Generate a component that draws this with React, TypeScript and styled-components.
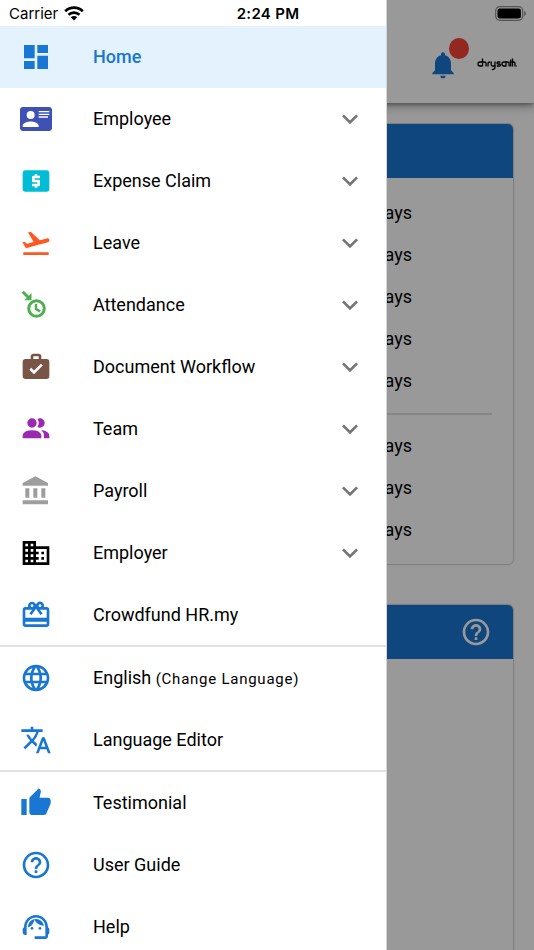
import React from "react";
import styled, { createGlobalStyle, css } from "styled-components";
import type { IconType } from "react-icons";
import {
  MdCardGiftcard,
  MdDashboard,
  MdDomain,
  MdExpandMore,
  MdFlightTakeoff,
  MdHelpOutline,
  MdLanguage,
  MdNotifications,
  MdSupportAgent,
  MdThumbUp,
  MdTranslate,
} from "react-icons/md";

const BLUE = "#1976d2";

const GlobalStyle = createGlobalStyle`
  *, *::before, *::after { box-sizing: border-box; }
  body {
    margin: 0;
    background: #fff;
    color: #000;
    font-family: Roboto, "Liberation Sans", sans-serif;
    font-size: 18px;
    line-height: 24px;
  }
  button { font: inherit; color: inherit; background: none; border: 0; padding: 0; cursor: pointer; }
  svg { display: block; flex: none; }
`;

const Screen = styled.div`
  position: relative;
  height: 100vh;
  overflow: hidden;
`;

/* ---------- page behind the drawer ---------- */

const AppBar = styled.header`
  display: flex;
  align-items: center;
  justify-content: flex-end;
  gap: 18px;
  height: 103px;
  padding: 26px 17px 0 0;
  background: #fff;
  box-shadow: 0 2px 4px rgba(0, 0, 0, 0.3), 0 4px 10px rgba(0, 0, 0, 0.25);
`;

const BellButton = styled.button`
  position: relative;
  color: ${BLUE};
`;

const Badge = styled.span`
  position: absolute;
  top: -11px;
  right: -10px;
  width: 20px;
  height: 21px;
  border-radius: 50%;
  background: #f44336;
`;

const Cards = styled.main`
  display: flex;
  flex-direction: column;
  gap: 39px;
  padding: 20px 20px 0;
`;

const Card = styled.section`
  border: 1px solid #d6d6d6;
  border-radius: 6px;
  overflow: hidden;
  box-shadow: 0 0 1px rgba(0, 0, 0, 0.2);
`;

const CardHeader = styled.div`
  display: flex;
  align-items: center;
  justify-content: flex-end;
  height: 54px;
  padding-right: 21px;
  background: ${BLUE};
  color: #fff;
`;

const DayGroup = styled.ul`
  margin: 0 21px;
  padding: 14px 0 11px;
  list-style: none;
  & + & {
    padding: 10px 0 13px;
    border-top: 2px solid #e0e0e0;
  }
`;

const DayRow = styled.li`
  display: flex;
  align-items: center;
  justify-content: flex-end;
  min-height: 42px;
  padding-right: 80px;
`;

const EmptyBody = styled.div`
  height: 400px;
`;

/* ---------- overlay and drawer ---------- */

const Scrim = styled.div`
  position: absolute;
  inset: 0;
  background: rgba(0, 0, 0, 0.4);
`;

const Drawer = styled.nav`
  position: absolute;
  inset: 0 auto 0 0;
  width: 387px;
  max-width: 90%;
  padding-top: 26px;
  overflow: hidden;
  background: #fff;
  border-right: 1px solid #d6d6d6;
`;

const Group = styled.ul`
  margin: 0;
  padding: 0;
  list-style: none;
  & + & {
    margin-top: -1px;
    border-top: 2px solid #e2e2e2;
  }
`;

const itemLayout = css`
  display: flex;
  align-items: center;
  width: 100%;
  height: 62px;
  padding: 0 20px;
  text-align: left;
  text-decoration: none;
`;

const ItemLink = styled.a<{ $active?: boolean }>`
  ${itemLayout}
  color: ${(p) => (p.$active ? BLUE : "#000")};
  background: ${(p) => (p.$active ? "#e3f2fd" : "transparent")};
  font-weight: ${(p) => (p.$active ? 500 : 400)};
`;

const ItemButton = styled.button`
  && { ${itemLayout} }
`;

const IconSlot = styled.span<{ $color: string }>`
  display: flex;
  width: 73px;
  color: ${(p) => p.$color};
`;

const Label = styled.span`
  flex: 1;
`;

const Hint = styled.span`
  font-size: 15px;
  letter-spacing: 0.05em;
`;

const Chevron = styled(MdExpandMore)`
  color: #757575;
`;

/* ---------- status bar ---------- */

const StatusBar = styled.div`
  position: absolute;
  inset: 0 0 auto 0;
  display: grid;
  grid-template-columns: 1fr auto 1fr;
  align-items: center;
  height: 26px;
  padding: 1px 7px 0 9px;
  font-family: Inter, "Liberation Sans", sans-serif;
  font-size: 15px;
`;

const Carrier = styled.span`
  display: flex;
  align-items: center;
  gap: 6px;
`;

const Clock = styled.time`
  font-weight: 600;
  letter-spacing: 0.02em;
`;

const BatterySlot = styled.span`
  justify-self: end;
`;

/* ---------- drawings ---------- */

const glyph = (d: string) =>
  function Glyph({ size = 32 }: { size?: number | string }) {
    return (
      <svg width={size} height={size} viewBox="0 0 24 24" fill="currentColor" aria-hidden="true">
        <path d={d} />
      </svg>
    );
  };

const CardAccount = glyph(
  "M2,3H22C23.05,3 24,3.95 24,5V19C24,20.05 23.05,21 22,21H2C0.95,21 0,20.05 0,19V5C0,3.95 0.95,3 2,3M14,6V7H22V6H14M14,8V9H21.5L22,9V8H14M14,10V11H21V10H14M8,13.91C6,13.91 2,15 2,17V18H14V17C14,15 10,13.91 8,13.91M8,6A3,3 0 0,0 5,9A3,3 0 0,0 8,12A3,3 0 0,0 11,9A3,3 0 0,0 8,6Z",
);
const Cash = glyph(
  "M20,4H4C2.89,4 2,4.89 2,6V18A2,2 0 0,0 4,20H20A2,2 0 0,0 22,18V6C22,4.89 21.1,4 20,4M15,10H11V11H14A1,1 0 0,1 15,12V15A1,1 0 0,1 14,16H13V17H11V16H9V14H13V13H10A1,1 0 0,1 9,12V9A1,1 0 0,1 10,8H11V7H13V8H15V10Z",
);
const BriefcaseCheck = glyph(
  "M10,2H14A2,2 0 0,1 16,4V6H20A2,2 0 0,1 22,8V19A2,2 0 0,1 20,21H4C2.89,21 2,20.1 2,19V8C2,6.89 2.89,6 4,6H8V4C8,2.89 8.89,2 10,2M14,6V4H10V6H14M10.5,17.5L17.09,10.91L15.68,9.5L10.5,14.67L8.41,12.59L7,14L10.5,17.5Z",
);
const People = glyph(
  "M16 17V19H2V17S2 13 9 13 16 17 16 17M12.5 7.5A3.5 3.5 0 1 0 9 11A3.5 3.5 0 0 0 12.5 7.5M15.94 13A5.32 5.32 0 0 1 18 17V19H22V17S22 13.37 15.94 13M15 4A3.39 3.39 0 0 0 13.07 4.59A5 5 0 0 1 13.07 10.41A3.39 3.39 0 0 0 15 11A3.5 3.5 0 0 0 15 4Z",
);
const Bank = glyph("M11.5,1L2,6V8H21V6M16,10V17H19V10M2,22H21V19H2M10,10V17H13V10M4,10V17H7V10H4Z");

function ClockIn() {
  return (
    <svg width="32" height="32" viewBox="0 0 32 32" fill="none" stroke="currentColor" aria-hidden="true">
      <circle cx="16.5" cy="19.5" r="7.8" strokeWidth="3" />
      <path d="M16 15v5l4 2.400" strokeWidth="2.4" />
      <path d="M2.700 2.700l6 6" strokeWidth="3" />
      <path d="M11.500 4v7.200H4.300z" fill="currentColor" stroke="none" />
    </svg>
  );
}

function Wifi() {
  return (
    <svg width="20" height="15" viewBox="0 0 20 15" fill="none" stroke="#000" strokeWidth="2.7" aria-hidden="true">
      <path d="M1.2 5.3a12.6 12.6 0 0 1 17.6 0" />
      <path d="M4.500 8.800a7.900 7.900 0 0 1 11 0" />
      <path d="M10 14.500l-3.200-3.200a4.600 4.600 0 0 1 6.400 0z" fill="#000" stroke="none" />
    </svg>
  );
}

function Battery() {
  return (
    <svg width="32" height="15" viewBox="0 0 32 15" role="img" aria-label="Battery full">
      <rect x="0.7" y="0.7" width="27" height="13.6" rx="4" fill="none" stroke="#000" strokeOpacity="0.45" strokeWidth="1.2" />
      <rect x="2.5" y="2.5" width="23.4" height="10" rx="2.3" />
      <path d="M29.200 5v5q1.800-.8 1.800-2.500t-1.800-2.500z" fillOpacity="0.45" />
    </svg>
  );
}

function Logo() {
  return (
    <svg width="40" height="13" viewBox="0 0 40 13" fill="none" stroke="#000" strokeWidth="1.3" strokeLinejoin="round" role="img" aria-label="chrysanth.">
      <path d="M5 4H3Q1 4 1 6T3 8H5" />
      <path d="M5.500 0.500V8.600M5.500 4h2Q9 4 9 5.600V8.600" />
      <path d="M11 8.600V5.600Q11 4 13.200 4" />
      <path d="M14.200 3.400V6.400Q14.200 8 15.800 8H17.800M18 3.400V9q0 2.600-3.200 2.600" />
      <path d="M23.400 4H21.200Q20 4 20 5T21.200 6H22.400q1.100 0 1.100 1T22.400 8H19.800" />
      <path d="M29 8.600V4H27Q25 4 25 6T27 8H29" />
      <path d="M29 4h1.500q1.600 0 1.600 1.600V8.600" />
      <path d="M33.700 1.500V8.600M32.600 4h2.300" />
      <path d="M35.500 0.500V8.600M35.500 4h1q1.500 0 1.500 1.600V8.600" />
      <path d="M39.400 7.600v1" strokeWidth="1" />
    </svg>
  );
}

/* ---------- data ---------- */

type Item = {
  label: string;
  hint?: string;
  icon: IconType | React.ComponentType<{ size?: number | string }>;
  color?: string;
  expands?: boolean;
  active?: boolean;
};

const groups: Item[][] = [
  [
    { label: "Home", icon: MdDashboard, active: true },
    { label: "Employee", icon: CardAccount, color: "#3f51b5", expands: true },
    { label: "Expense Claim", icon: Cash, color: "#00bcd4", expands: true },
    { label: "Leave", icon: MdFlightTakeoff, color: "#ff5722", expands: true },
    { label: "Attendance", icon: ClockIn, color: "#4caf50", expands: true },
    { label: "Document Workflow", icon: BriefcaseCheck, color: "#795548", expands: true },
    { label: "Team", icon: People, color: "#9c27b0", expands: true },
    { label: "Payroll", icon: Bank, color: "#9e9e9e", expands: true },
    { label: "Employer", icon: MdDomain, color: "#000", expands: true },
    { label: "Crowdfund HR.my", icon: MdCardGiftcard },
  ],
  [
    { label: "English", hint: "(Change Language)", icon: MdLanguage },
    { label: "Language Editor", icon: MdTranslate },
  ],
  [
    { label: "Testimonial", icon: MdThumbUp },
    { label: "User Guide", icon: MdHelpOutline },
    { label: "Help", icon: MdSupportAgent },
  ],
];

function MenuItem({ label, hint, icon: Icon, color = BLUE, expands, active }: Item) {
  const content = (
    <>
      <IconSlot $color={color}>
        <Icon size={32} />
      </IconSlot>
      <Label>
        {label} {hint && <Hint>{hint}</Hint>}
      </Label>
    </>
  );
  return (
    <li>
      {expands ? (
        <ItemButton type="button" aria-expanded={false}>
          {content}
          <Chevron size={32} />
        </ItemButton>
      ) : (
        <ItemLink href="#" $active={active} aria-current={active ? "page" : undefined}>
          {content}
        </ItemLink>
      )}
    </li>
  );
}

export default function App() {
  return (
    <Screen>
      <GlobalStyle />
      <AppBar>
        <BellButton type="button" aria-label="Notifications">
          <MdNotifications size={32} />
          <Badge />
        </BellButton>
        <Logo />
      </AppBar>
      <Cards>
        <Card>
          <CardHeader />
          {[5, 3].map((count) => (
            <DayGroup key={count}>
              {Array.from({ length: count }, (_, i) => (
                <DayRow key={i}>Days</DayRow>
              ))}
            </DayGroup>
          ))}
        </Card>
        <Card>
          <CardHeader>
            <button type="button" aria-label="About this card">
              <MdHelpOutline size={32} />
            </button>
          </CardHeader>
          <EmptyBody />
        </Card>
      </Cards>
      <Scrim />
      <Drawer aria-label="Main menu">
        {groups.map((items) => (
          <Group key={items[0].label}>
            {items.map((item) => (
              <MenuItem key={item.label} {...item} />
            ))}
          </Group>
        ))}
      </Drawer>
      <StatusBar>
        <Carrier>
          Carrier <Wifi />
        </Carrier>
        <Clock>2:24 PM</Clock>
        <BatterySlot>
          <Battery />
        </BatterySlot>
      </StatusBar>
    </Screen>
  );
}
